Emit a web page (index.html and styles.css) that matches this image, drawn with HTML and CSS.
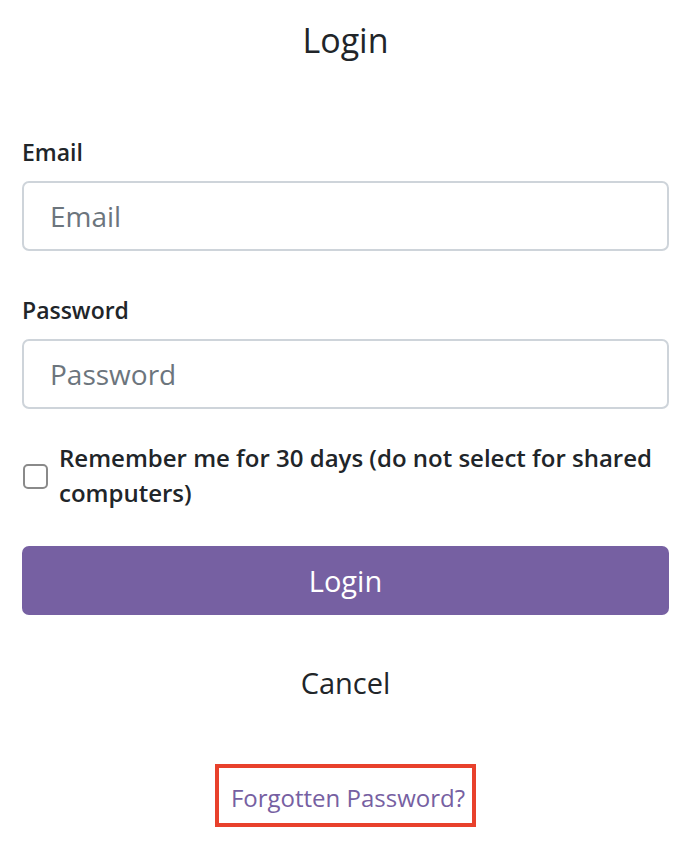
FILE: index.html
```html
<!DOCTYPE html>
<html lang="en">
<head>
    <meta charset="UTF-8">
    <meta name="viewport" content="width=device-width, initial-scale=1.0">
    <title>Login</title>
    <link rel="stylesheet" href="styles.css">
</head>
<body>
    <div class="login">
        <h1>Login</h1>
        <form class="login-form">
            <div class="field">
                <label for="email">Email</label>
                <input type="email" id="email" placeholder="Email">
            </div>
            <div class="field">
                <label for="password">Password</label>
                <input type="password" id="password" placeholder="Password">
            </div>
            <div class="remember">
                <input type="checkbox" id="remember">
                <label for="remember">Remember me for 30 days (do not select for shared computers)</label>
            </div>
            <button type="button" class="btn-login">Login</button>
            <a class="cancel" href="#">Cancel</a>
            <div class="forgot">
                <a href="#">Forgotten Password?</a>
            </div>
        </form>
    </div>
</body>
</html>
```

FILE: styles.css
```css
body {
    margin: 0;
    font-family: "Open Sans", Arial, sans-serif;
    color: #212529;
    background-color: #ffffff;
}
.login {
    padding: 0 21px 0 22px;
}
h1 {
    margin: 17px 0 0;
    text-align: center;
    font-size: 34px;
    font-weight: 400;
    line-height: 46px;
}
.login-form {
    margin-top: 73px;
}
.field + .field {
    margin-top: 43px;
}
.field label {
    display: block;
    margin-bottom: 13px;
    font-size: 23px;
    font-weight: 600;
    line-height: 32px;
}
.field input {
    display: block;
    width: 100%;
    height: 70px;
    padding: 0 26px;
    box-sizing: border-box;
    border: 2px solid #ced4da;
    border-radius: 7px;
    font-family: inherit;
    font-size: 28px;
    color: #495057;
}
.field input::placeholder {
    color: #6c757d;
}
.remember {
    display: flex;
    align-items: center;
    gap: 11px;
    margin-top: 31px;
}
.remember input {
    flex: none;
    width: 25px;
    height: 25px;
    margin: 2px 0 0 1px;
    appearance: none;
    border: 2px solid #8a8a8a;
    border-radius: 5px;
    background: #fff;
}
.remember label {
    font-size: 24px;
    font-weight: 600;
    line-height: 35px;
}
.btn-login {
    display: block;
    width: 100%;
    height: 69px;
    margin-top: 36px;
    border: none;
    border-radius: 7px;
    background-color: #7660a2;
    color: #ffffff;
    font-family: inherit;
    font-size: 29px;
    cursor: pointer;
}
.cancel {
    display: block;
    margin-top: 48px;
    text-align: center;
    font-size: 29px;
    line-height: 40px;
    color: #212529;
    text-decoration: none;
}
.forgot {
    margin-top: 61px;
    text-align: center;
}
.forgot a {
    display: inline-block;
    padding: 14px 7px 9px 12px;
    border: 4px solid #e8412c;
    font-size: 24px;
    line-height: 32px;
    color: #7660a2;
    text-decoration: none;
}
```
